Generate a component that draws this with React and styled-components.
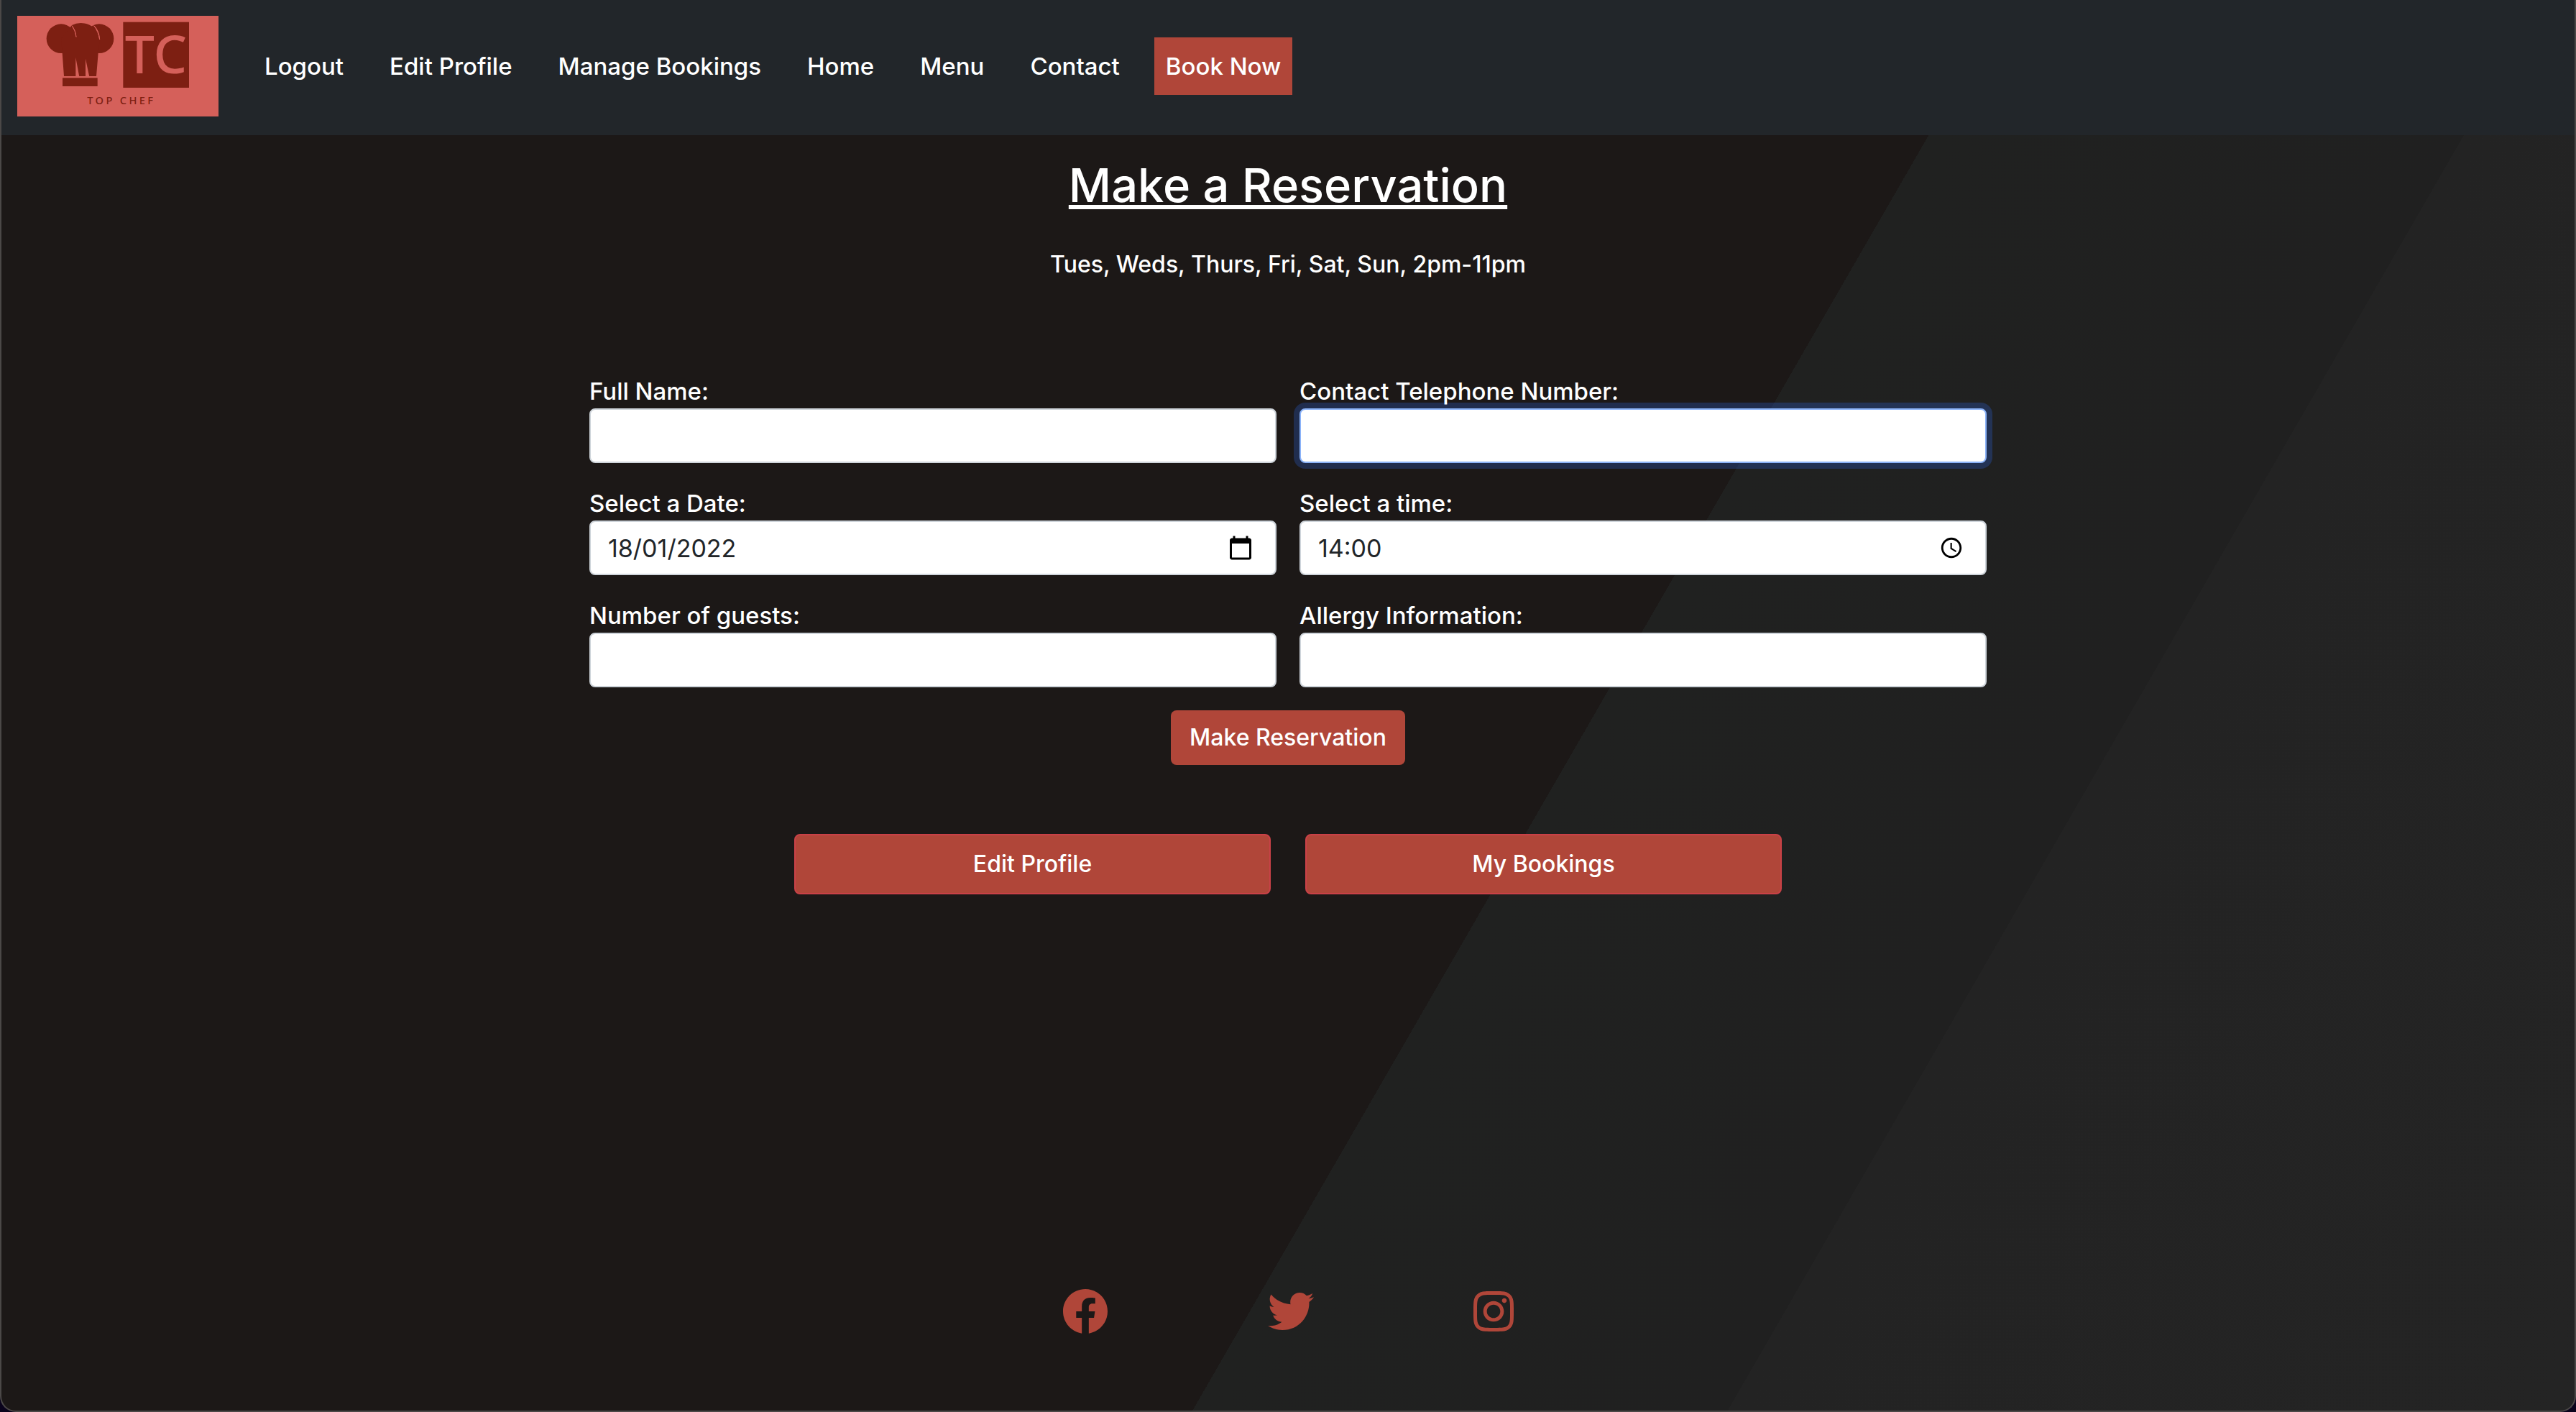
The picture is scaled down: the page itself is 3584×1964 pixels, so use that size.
import React from "react";
import styled, { createGlobalStyle } from "styled-components";
import { FaFacebook, FaTwitter, FaInstagram } from "react-icons/fa";
import { MdCalendarToday, MdAccessTime } from "react-icons/md";

const brand = "#b04639";
const sans = '"Inter", "Open Sans", "Liberation Sans", sans-serif';

const GlobalStyle = createGlobalStyle`
  *, *::before, *::after { box-sizing: border-box; }
  html { background: #0a031c; }
  body {
    margin: 0;
    font-family: ${sans};
    font-size: 32px;
    font-weight: 500;
    line-height: 48px;
    color: #fff;
  }
`;

const Page = styled.div`
  display: flex;
  flex-direction: column;
  min-height: 100vh;
  border: 2px solid #4b4847;
  border-top: 0;
  border-radius: 0 0 22px 22px;
  background: linear-gradient(
    120deg,
    #1c1817 0%,
    #1c1817 59.2%,
    #202120 59.2%,
    #202020 75%,
    #232323 75%,
    #242424 100%
  );
`;

const Header = styled.header`
  display: flex;
  align-items: center;
  gap: 48px;
  padding: 22px 22px 26px;
  background: #22262a;
`;

const LogoLink = styled.a`
  display: block;
  flex: none;

  svg {
    display: block;
    width: 280px;
    height: 140px;
  }
`;

const NavList = styled.ul`
  display: flex;
  flex-wrap: wrap;
  gap: 32px;
  margin: 0;
  padding: 0;
  list-style: none;
`;

const NavLink = styled.a`
  display: block;
  padding: 16px;
  color: #fff;
  font-size: 33px;
  text-decoration: none;
  background: ${(p) => (p.$highlight ? brand : "transparent")};
`;

const Main = styled.main`
  display: flex;
  flex-direction: column;
  align-items: center;
  padding: 32px 24px;
`;

const Title = styled.h1`
  margin: 0 0 48px;
  font-size: 65px;
  font-weight: 500;
  line-height: 76px;
  text-decoration: underline;
  text-decoration-thickness: 6px;
  text-underline-offset: 4px;
  text-decoration-skip-ink: none;
`;

const Hours = styled.p`
  margin: 0 0 128px;
`;

const Form = styled.form`
  display: grid;
  grid-template-columns: 1fr 1fr;
  gap: 32px;
  width: 100%;
  max-width: 1944px;
`;

const Field = styled.div`
  display: flex;
  flex-direction: column;
`;

const Label = styled.label`
  z-index: 1;
  font-size: 33px;
`;

const Control = styled.div`
  display: flex;
  align-items: center;
  height: 76px;
  padding-right: 30px;
  border: 2px solid ${(p) => (p.$active ? "#8ab2f8" : "#ced4da")};
  border-radius: 8px;
  background: #fff;
  box-shadow: ${(p) => (p.$active ? "0 0 0 8px rgba(44, 108, 244, 0.25)" : "none")};
`;

const Input = styled.input`
  flex: 1;
  min-width: 0;
  height: 100%;
  padding: 0 24px;
  border: 0;
  outline: 0;
  background: transparent;
  color: #212529;
  font-family: inherit;
  font-size: 34px;
  font-weight: 400;
`;

const PickerButton = styled.button`
  display: flex;
  padding: 0;
  border: 0;
  background: none;
  color: #000;
`;

const SubmitButton = styled.button`
  grid-column: 1 / -1;
  justify-self: center;
  height: 76px;
  padding: 0 26px;
  border: 0;
  border-radius: 8px;
  background: ${brand};
  color: #fff;
  font: inherit;
`;

const Actions = styled.div`
  display: grid;
  grid-template-columns: 1fr 1fr;
  gap: 48px;
  width: 100%;
  max-width: 1374px;
  margin-top: 96px;
`;

const ActionLink = styled.a`
  padding: 16px 24px;
  border: 2px solid #c94147;
  border-radius: 8px;
  background: ${brand};
  color: #fff;
  text-align: center;
  text-decoration: none;
`;

const Footer = styled.footer`
  display: flex;
  justify-content: center;
  gap: 222px;
  margin-top: auto;
  padding: 32px 24px 106px;
`;

const SocialLink = styled.a`
  display: block;
  color: ${brand};

  svg {
    display: block;
    width: ${(p) => p.$width}px;
    height: 64px;
  }
`;

const navItems = ["Logout", "Edit Profile", "Manage Bookings", "Home", "Menu", "Contact", "Book Now"];

const fields = [
  { id: "name", label: "Full Name:" },
  { id: "phone", label: "Contact Telephone Number:", type: "tel", active: true },
  { id: "date", label: "Select a Date:", value: "18/01/2022", icon: <MdCalendarToday size={36} />, picker: "Open date picker" },
  { id: "time", label: "Select a time:", value: "14:00", icon: <MdAccessTime size={34} />, picker: "Open time picker" },
  { id: "guests", label: "Number of guests:" },
  { id: "allergies", label: "Allergy Information:" },
];

const socials = [
  { name: "Facebook", Icon: FaFacebook, width: 64 },
  { name: "Twitter", Icon: FaTwitter, width: 64 },
  { name: "Instagram", Icon: FaInstagram, width: 56 },
];

const logoFont = '"Noto Sans", "Open Sans", sans-serif';

function Logo() {
  return (
    <svg viewBox="72 66 840 420" role="img" aria-label="Top Chef">
      <rect x="72" y="66" width="840" height="420" fill="#d5605a" />
      <g fill="#7d1f12">
        <circle cx="255" cy="161" r="61" />
        <circle cx="414" cy="161" r="61" />
        <path d="M255 161L300 105Q318 96 337 96C380 97 414 125 416 165L410 222L402 318H267L260 222Z" />
        <rect x="261" y="325" width="146" height="35" />
        <rect x="514" y="92" width="275" height="274" />
      </g>
      <g fill="#d5605a">
        <path d="M300 107Q316 128 318 154Q314 124 300 107Z" stroke="#d5605a" strokeWidth="3" />
        <path d="M392 107Q414 128 416 165Q411 132 392 107Z" stroke="#d5605a" strokeWidth="3" />
        <path d="M316 240V320H331Z" />
        <path d="M357 245V320H373Z" />
      </g>
      <text
        x="651"
        y="307"
        fill="#d5605a"
        fontFamily={logoFont}
        fontSize="220"
        fontWeight="500"
        textAnchor="middle"
      >
        TC
      </text>
      <text
        x="364"
        y="436"
        fill="#7d1f12"
        fontFamily={logoFont}
        fontSize="44"
        fontWeight="500"
        letterSpacing="10"
      >
        TOP CHEF
      </text>
    </svg>
  );
}

export default function App() {
  return (
    <>
      <GlobalStyle />
      <Page>
        <Header>
          <LogoLink href="#home">
            <Logo />
          </LogoLink>
          <nav>
            <NavList>
              {navItems.map((item) => (
                <li key={item}>
                  <NavLink href="#" $highlight={item === "Book Now"}>
                    {item}
                  </NavLink>
                </li>
              ))}
            </NavList>
          </nav>
        </Header>
        <Main>
          <Title>Make a Reservation</Title>
          <Hours>Tues, Weds, Thurs, Fri, Sat, Sun, 2pm-11pm</Hours>
          <Form onSubmit={(e) => e.preventDefault()}>
            {fields.map((f) => (
              <Field key={f.id}>
                <Label htmlFor={f.id}>{f.label}</Label>
                <Control $active={f.active}>
                  <Input id={f.id} name={f.id} type={f.type || "text"} defaultValue={f.value} />
                  {f.icon && (
                    <PickerButton type="button" aria-label={f.picker}>
                      {f.icon}
                    </PickerButton>
                  )}
                </Control>
              </Field>
            ))}
            <SubmitButton type="submit">Make Reservation</SubmitButton>
          </Form>
          <Actions>
            <ActionLink href="#profile">Edit Profile</ActionLink>
            <ActionLink href="#bookings">My Bookings</ActionLink>
          </Actions>
        </Main>
        <Footer>
          {socials.map(({ name, Icon, width }) => (
            <SocialLink key={name} href="#" aria-label={name} $width={width}>
              <Icon />
            </SocialLink>
          ))}
        </Footer>
      </Page>
    </>
  );
}
